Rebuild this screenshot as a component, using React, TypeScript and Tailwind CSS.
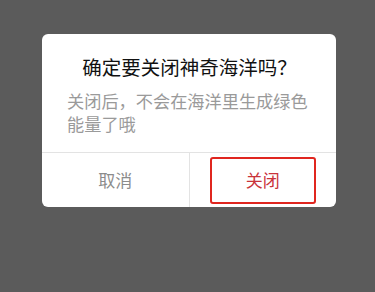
import React from 'react';

const font = { fontFamily: '"Noto Sans CJK SC", "Noto Sans", sans-serif' };

export default function App() {
  return (
    <div className="w-[375px] h-[292px] bg-[#5b5b5b] pt-[34px] pl-[42px]" style={font}>
      <div className="w-[294px] h-[173px] bg-white rounded-[6px] flex flex-col overflow-hidden">
        <div className="pt-[19px] pl-[25px] pr-[24px] pb-[17px]">
          <h2 className="text-[19.5px] leading-[27px] text-[#111] text-center">确定要关闭神奇海洋吗？</h2>
          <p className="mt-[9px] text-[17.2px] leading-[23px] text-[#9a9a9a]">
            关闭后，不会在海洋里生成绿色能量了哦
          </p>
        </div>
        <div className="flex-1 flex border-t border-[#e3e3e3]">
          <button className="flex-1 flex items-center justify-center text-[17px] text-[#8c8c8c] border-r border-[#e3e3e3]">
            取消
          </button>
          <div className="flex-1 flex items-center justify-center">
            <button className="w-[106px] h-[47px] border-2 border-[#e0261f] rounded-[3px] text-[17px] text-[#c9343b]">
              关闭
            </button>
          </div>
        </div>
      </div>
    </div>
  );
}
